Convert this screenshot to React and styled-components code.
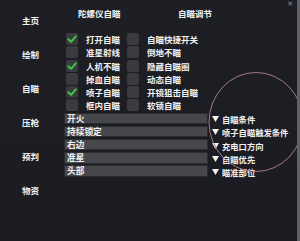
import styled, { createGlobalStyle } from "styled-components";

const GlobalStyle = createGlobalStyle`
  html, body {
    margin: 0;
    padding: 0;
    background: #1c1d22;
  }
  * {
    box-sizing: border-box;
  }
`;

const menu = ["主页", "绘制", "自瞄", "压枪", "预判", "物资"];

const leftChecks = [
  { label: "打开自瞄", on: true },
  { label: "准星射线", on: false },
  { label: "人机不瞄", on: true },
  { label: "掉血自瞄", on: false },
  { label: "喷子自瞄", on: true },
  { label: "框内自瞄", on: false },
];

const rightChecks = [
  "自瞄快捷开关",
  "倒地不瞄",
  "隐藏自瞄圈",
  "动态自瞄",
  "开镜狙击自瞄",
  "软锁自瞄",
];

const selects = [
  { value: "开火", label: "自瞄条件" },
  { value: "持续锁定", label: "喷子自瞄触发条件" },
  { value: "右边", label: "充电口方向" },
  { value: "准星", label: "自瞄优先" },
  { value: "头部", label: "瞄准部位" },
];

const Check = ({ on }) => (
  <Box>
    {on && (
      <svg width="12" height="12" viewBox="0 0 12 12">
        <path
          d="M2.4 6.3 L5 8.8 L9.8 3.4"
          fill="none"
          stroke="#3fc83f"
          strokeWidth="2"
          strokeLinecap="round"
          strokeLinejoin="round"
        />
      </svg>
    )}
  </Box>
);

const App = () => {
  return (
    <Frame>
      <GlobalStyle />
      <Sidebar>
        {menu.map((m) => (
          <MenuItem key={m}>{m}</MenuItem>
        ))}
      </Sidebar>

      <Main>
        <Headers>
          <Heading $w={100}>陀螺仪自瞄</Heading>
          <Heading>自瞄调节</Heading>
        </Headers>

        <CheckGrid>
          {leftChecks.map((c, i) => (
            <CheckPair key={c.label}>
              <CheckRow>
                <Check on={c.on} />
                <Label>{c.label}</Label>
              </CheckRow>
              <CheckRow>
                <Check on={false} />
                <Label>{rightChecks[i]}</Label>
              </CheckRow>
            </CheckPair>
          ))}
        </CheckGrid>

        <Selects>
          {selects.map((s) => (
            <SelectRow key={s.label}>
              <Field>{s.value}</Field>
              <Caret>
                <svg width="7" height="6" viewBox="0 0 7 6">
                  <path d="M0 0 H7 L3.5 6 Z" fill="#f2f2f2" />
                </svg>
                <span>{s.label}</span>
              </Caret>
            </SelectRow>
          ))}
        </Selects>
      </Main>

      <Close>✕</Close>
      <Ring width="100" height="102" viewBox="0 0 100 102">
        <ellipse cx="50" cy="51" rx="47" ry="49.5" fill="none" stroke="#a6778a" strokeWidth="1" />
      </Ring>
    </Frame>
  );
};

const Frame = styled.div`
  position: relative;
  width: 300px;
  height: 241px;
  display: grid;
  grid-template-columns: 62px 1fr;
  background: linear-gradient(180deg, #1e1f24 0%, #1b1c21 100%);
  border-right: 3px solid #5f5f66;
  overflow: hidden;
  font-family: "Noto Sans CJK SC", "Noto Sans", sans-serif;
  font-weight: 700;
  color: #f2f2f2;
`;

const Sidebar = styled.nav`
  display: flex;
  flex-direction: column;
  gap: 24px;
  padding: 15px 0 0 22px;
`;

const MenuItem = styled.div`
  font-size: 8.5px;
  line-height: 10px;
  height: 10px;
  white-space: nowrap;
`;

const Main = styled.div`
  display: flex;
  flex-direction: column;
  padding: 8px 0 0 2px;
`;

const Headers = styled.div`
  display: flex;
  padding-left: 14px;
  height: 10px;
`;

const Heading = styled.div`
  width: ${(p) => (p.$w ? `${p.$w}px` : "auto")};
  font-size: 8.5px;
  line-height: 10px;
  white-space: nowrap;
`;

const CheckGrid = styled.div`
  display: flex;
  flex-direction: column;
  margin-top: 15px;
  padding-left: 2px;
`;

const CheckPair = styled.div`
  display: grid;
  grid-template-columns: 61px 1fr;
  height: 13.3px;
  align-items: start;
`;

const CheckRow = styled.div`
  display: flex;
  align-items: center;
  gap: 8px;
  height: 12px;
`;

const Box = styled.div`
  width: 12px;
  height: 12px;
  flex: none;
  border-radius: 2px;
  background: #3a3b3f;
  display: flex;
`;

const Label = styled.span`
  font-size: 8.5px;
  line-height: 10px;
  white-space: nowrap;
`;

const Selects = styled.div`
  display: flex;
  flex-direction: column;
  gap: 1.7px;
  margin-top: -0.5px;
`;

const SelectRow = styled.div`
  display: grid;
  grid-template-columns: 144px 1fr;
  column-gap: 4px;
  height: 11.5px;
  align-items: center;
`;

const Field = styled.div`
  height: 11.5px;
  background: #46474b;
  border: 1px solid #2b2c30;
  padding-left: 2px;
  font-size: 8.7px;
  line-height: 9.5px;
  white-space: nowrap;
`;

const Caret = styled.div`
  display: flex;
  align-items: center;
  gap: 3px;
  padding-top: 2px;
  font-size: 8.3px;
  line-height: 10px;
  white-space: nowrap;
`;

const Close = styled.div`
  position: absolute;
  top: 0px;
  right: 4px;
  font-size: 7px;
  line-height: 8px;
  color: #8a8a90;
  font-weight: 400;
  font-family: "DejaVu Sans", sans-serif;
`;

const Ring = styled.svg`
  position: absolute;
  left: 206px;
  top: 71px;
  pointer-events: none;
`;

export default App;
